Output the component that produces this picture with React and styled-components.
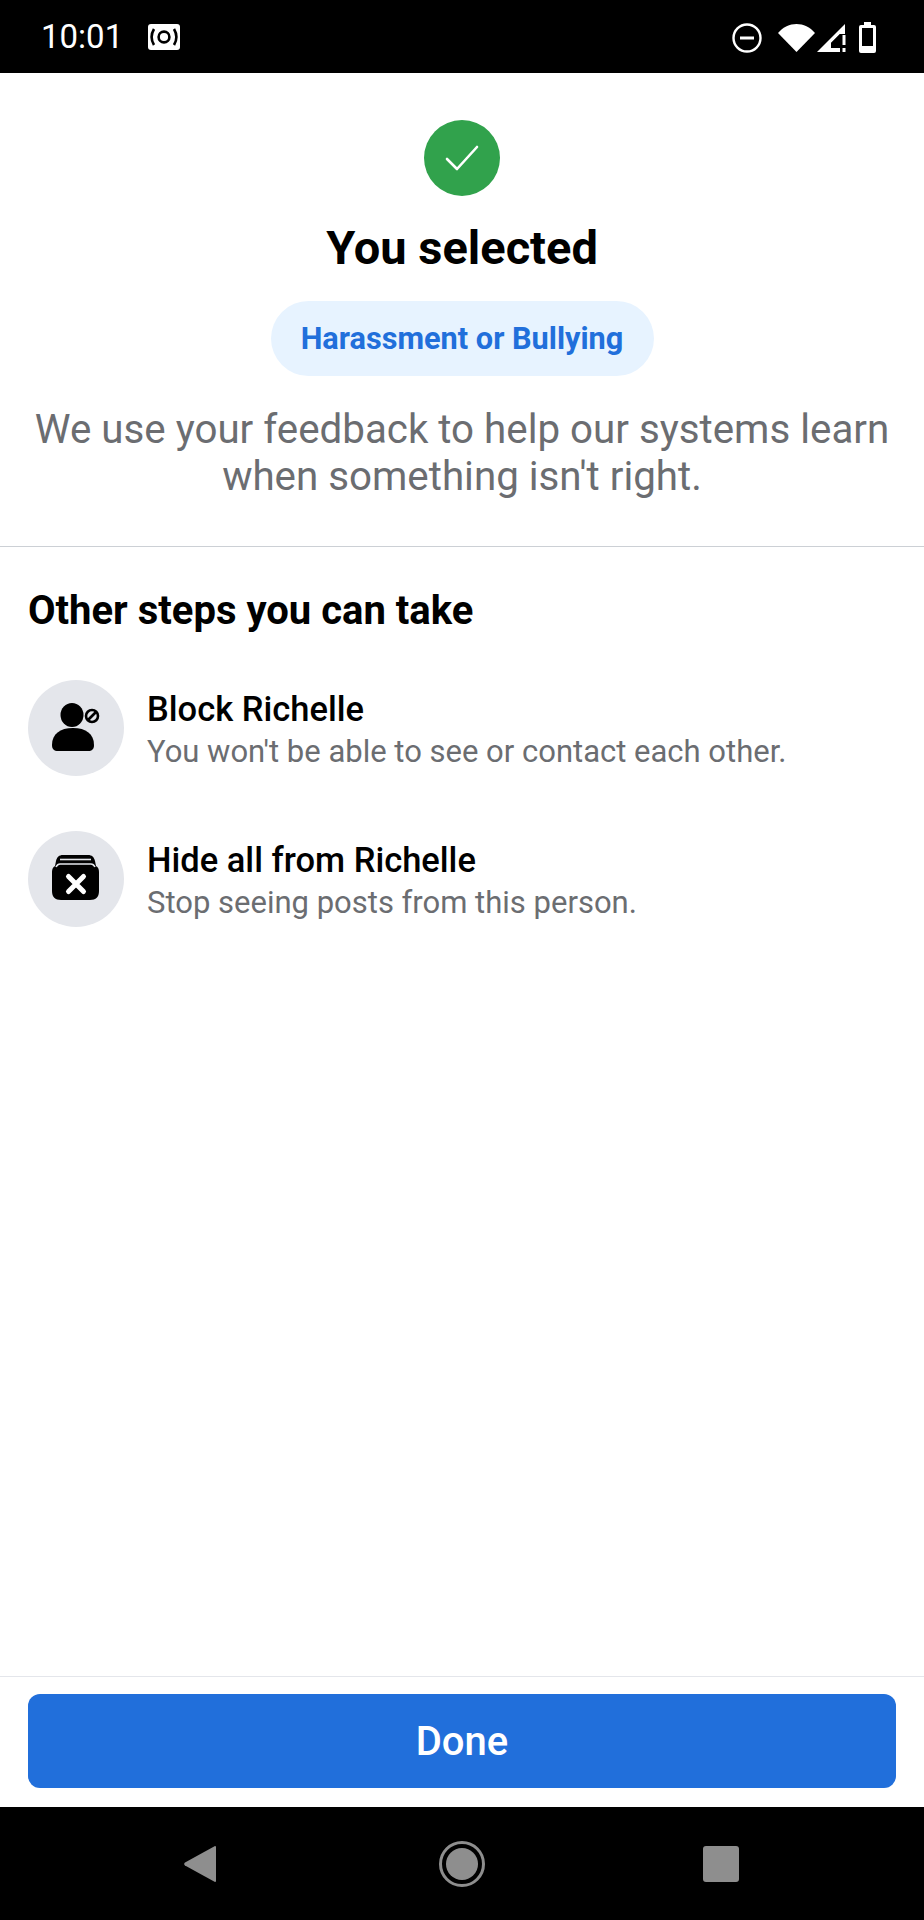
import React from "react";
import styled, { createGlobalStyle } from "styled-components";

const GlobalStyle = createGlobalStyle`
  html, body {
    margin: 0;
    padding: 0;
    background: #fff;
  }
  * {
    box-sizing: border-box;
  }
`;

const steps = [
  {
    id: "block",
    title: "Block Richelle",
    text: "You won't be able to see or contact each other.",
    icon: "block",
  },
  {
    id: "hide",
    title: "Hide all from Richelle",
    text: "Stop seeing posts from this person.",
    icon: "hide",
  },
];

const BlockIcon = () => (
  <svg width="96" height="96" viewBox="0 0 96 96">
    <ellipse cx="44" cy="35" rx="11.5" ry="12" fill="#000" />
    <path d="M24 65c0-11 8-17 21-17s21 6 21 17c0 4-2 6-6 6H30c-4 0-6-2-6-6z" fill="#000" />
    <circle cx="64" cy="36" r="6" fill="none" stroke="#000" strokeWidth="2.6" />
    <path d="M60 40l8-8" stroke="#000" strokeWidth="2.6" />
  </svg>
);

const HideIcon = () => (
  <svg width="96" height="96" viewBox="0 0 96 96">
    <path
      d="M35 24h25c4 0 6 2 7 6l1 5c2 1 3 3 3 6v19c0 6-3 9-9 9H33c-6 0-9-3-9-9V41c0-3 1-5 3-6l1-5c1-4 3-6 7-6z"
      fill="#000"
    />
    <path d="M32 28.5h31" stroke="#e4e6eb" strokeWidth="1.6" fill="none" />
    <path d="M28 36c1-2 2-3 4-3h31c2 0 3 1 4 3" stroke="#e4e6eb" strokeWidth="1.6" fill="none" />
    <path d="M40.5 45.5l15 15M55.5 45.5l-15 15" stroke="#fff" strokeWidth="5" strokeLinecap="round" />
  </svg>
);

const App = () => {
  return (
    <>
      <GlobalStyle />
      <Screen>
        <StatusBar>
          <StatusLeft>
            <Clock>10:01</Clock>
            <svg width="32" height="26" viewBox="0 0 32 26">
              <rect width="32" height="26" rx="3" fill="#fff" />
              <circle cx="16" cy="13" r="5.4" fill="none" stroke="#000" strokeWidth="2.6" />
              <path d="M6 5c-3 5-3 11 0 16M26 5c3 5 3 11 0 16" fill="none" stroke="#000" strokeWidth="2.6" />
            </svg>
          </StatusLeft>
          <StatusRight>
            <svg width="30" height="30" viewBox="0 0 30 30">
              <circle cx="15" cy="15" r="13.5" fill="none" stroke="#fff" strokeWidth="2.4" />
              <rect x="8" y="13.5" width="14" height="3" fill="#fff" />
            </svg>
            <svg width="37" height="28" viewBox="0 0 37 28">
              <path d="M0 9C10-3 27-3 37 9L18.5 28z" fill="#fff" />
            </svg>
            <svg width="30" height="28" viewBox="0 0 30 28">
              <path d="M0 28L28 0v10h-5l-9 9v5h9v4z" fill="#fff" />
              <path d="M14 19l9-9v14h-9z" fill="#000" />
              <rect x="25.5" y="11" width="3" height="10" fill="#fff" />
              <rect x="25.5" y="24" width="3" height="4" fill="#fff" />
            </svg>
            <BatteryIcon width="17" height="31" viewBox="0 0 17 31">
              <path d="M5 0h7v3h3a2 2 0 0 1 2 2v24a2 2 0 0 1-2 2H2a2 2 0 0 1-2-2V5a2 2 0 0 1 2-2h3z" fill="#fff" />
              <rect x="3" y="6" width="11" height="18" fill="#000" />
            </BatteryIcon>
          </StatusRight>
        </StatusBar>

        <Content>
          <Summary>
            <CheckCircle>
              <svg width="34" height="28" viewBox="0 0 34 28">
                <path d="M2 15l10 10L32 3" fill="none" stroke="#fff" strokeWidth="2.6" strokeLinecap="round" strokeLinejoin="round" />
              </svg>
            </CheckCircle>
            <Title>You selected</Title>
            <Pill>Harassment or Bullying</Pill>
            <Description>
              We use your feedback to help our systems learn
              <br />
              when something isn't right.
            </Description>
          </Summary>

          <StepsSection>
            <StepsHeading>Other steps you can take</StepsHeading>
            <StepList>
              {steps.map((step) => (
                <StepRow key={step.id}>
                  <StepIcon>{step.icon === "block" ? <BlockIcon /> : <HideIcon />}</StepIcon>
                  <StepText>
                    <StepTitle>{step.title}</StepTitle>
                    <StepSub>{step.text}</StepSub>
                  </StepText>
                </StepRow>
              ))}
            </StepList>
          </StepsSection>
        </Content>

        <Footer>
          <DoneButton>Done</DoneButton>
        </Footer>

        <NavBar>
          <svg width="32" height="38" viewBox="0 0 32 38">
            <path d="M31 1a1 1 0 0 1 1 1v34a1 1 0 0 1-1 1L1 20.5a2 2 0 0 1 0-3z" fill="#8e8e8e" />
          </svg>
          <HomeIcon width="46" height="46" viewBox="0 0 46 46">
            <circle cx="23" cy="23" r="21.5" fill="none" stroke="#8e8e8e" strokeWidth="3" />
            <circle cx="23" cy="23" r="16" fill="#8e8e8e" />
          </HomeIcon>
          <svg width="36" height="36" viewBox="0 0 36 36">
            <rect width="36" height="36" rx="3" fill="#8e8e8e" />
          </svg>
        </NavBar>
      </Screen>
    </>
  );
};

const Screen = styled.div`
  width: 924px;
  height: 1920px;
  display: flex;
  flex-direction: column;
  background: #fff;
  font-family: Roboto, "Liberation Sans", sans-serif;
  overflow: hidden;
`;

const StatusBar = styled.div`
  height: 73px;
  flex: none;
  background: #000;
  display: flex;
  align-items: center;
  justify-content: space-between;
  padding: 0 48px 0 41px;
`;

const StatusLeft = styled.div`
  display: flex;
  align-items: center;
  gap: 25px;
`;

const Clock = styled.span`
  color: #fff;
  font-size: 33px;
  line-height: 40px;
  font-weight: 400;
`;

const StatusRight = styled.div`
  display: flex;
  align-items: center;
  gap: 2px;
  margin-top: 2px;

  svg:first-child {
    margin-right: 14px;
  }
`;

const BatteryIcon = styled.svg`
  margin-left: 10px;
`;

const Content = styled.div`
  flex: 1;
  display: flex;
  flex-direction: column;
`;

const Summary = styled.div`
  height: 474px;
  flex: none;
  display: flex;
  flex-direction: column;
  align-items: center;
  padding-top: 47px;
  border-bottom: 1px solid #ccd0d5;
`;

const CheckCircle = styled.div`
  width: 76px;
  height: 76px;
  border-radius: 50%;
  background: #31a24c;
  display: flex;
  align-items: center;
  justify-content: center;
`;

const Title = styled.h1`
  margin: 25px 0 0;
  font-size: 47px;
  line-height: 54px;
  font-weight: 700;
  color: #000;
`;

const Pill = styled.div`
  margin-top: 26px;
  width: 383px;
  height: 75px;
  border-radius: 38px;
  background: #e7f3ff;
  color: #216fdb;
  font-size: 30.7px;
  font-weight: 700;
  display: flex;
  align-items: center;
  justify-content: center;
`;

const Description = styled.p`
  margin: 30px 0 0;
  font-size: 40.3px;
  line-height: 47px;
  font-weight: 400;
  color: #6b6d71;
  text-align: center;
  white-space: nowrap;
`;

const StepsSection = styled.div`
  padding: 41px 28px 0;
`;

const StepsHeading = styled.h2`
  margin: 0;
  font-size: 40px;
  line-height: 46px;
  font-weight: 700;
  color: #000;
`;

const StepList = styled.div`
  margin-top: 46px;
  display: flex;
  flex-direction: column;
  gap: 55px;
`;

const StepRow = styled.div`
  display: flex;
  align-items: center;
  gap: 23px;
`;

const StepIcon = styled.div`
  width: 96px;
  height: 96px;
  flex: none;
  border-radius: 50%;
  background: #e4e6eb;
`;

const StepText = styled.div`
  display: flex;
  flex-direction: column;
  padding-top: 4px;
`;

const StepTitle = styled.div`
  font-size: 34.5px;
  line-height: 40px;
  font-weight: 500;
  color: #000;
`;

const StepSub = styled.div`
  margin-top: 2px;
  font-size: 31px;
  line-height: 41px;
  font-weight: 400;
  color: #6b6d71;
`;

const Footer = styled.div`
  height: 131px;
  flex: none;
  padding: 17px 28px 0;
  border-top: 1px solid #e4e6eb;
`;

const DoneButton = styled.button`
  width: 100%;
  height: 94px;
  border: none;
  border-radius: 12px;
  background: #216fdb;
  color: #fff;
  font-family: inherit;
  font-size: 40px;
  font-weight: 500;
`;

const NavBar = styled.div`
  height: 113px;
  flex: none;
  background: #000;
  display: flex;
  align-items: center;
  padding: 0 185px 0 184px;
  justify-content: space-between;
`;

const HomeIcon = styled.svg`
  margin-left: 5px;
`;

export default App;
